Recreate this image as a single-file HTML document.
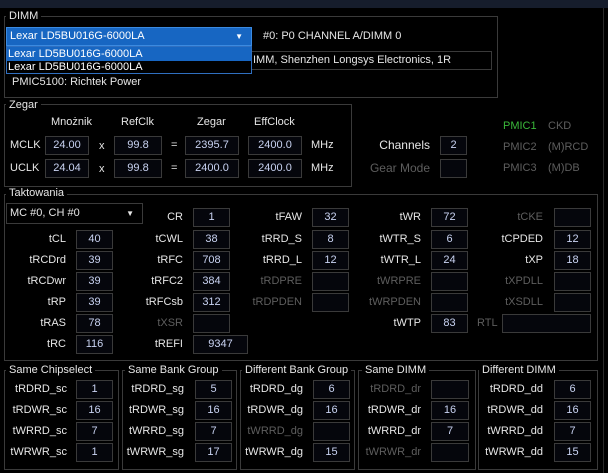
<!DOCTYPE html>
<html><head><meta charset="utf-8"><style>
*{margin:0;padding:0;box-sizing:border-box}
body{width:608px;height:473px;background:#000;font-family:"Liberation Sans",sans-serif;font-size:11px;color:#e6e6e6;position:relative;overflow:hidden}
.a{position:absolute;white-space:nowrap}
.g{position:absolute;border:1px solid #3a3a3a}
.t{position:absolute;background:#000;padding:0 3px;color:#e6e6e6;font-size:11px;line-height:13px}
.b{position:absolute;border:1px solid #3a3a3a;background:#05060c;color:#c9d3f2;text-align:center;height:19px;line-height:17px}
.l{position:absolute;text-align:right;line-height:19px;width:90px;white-space:nowrap}
.d{color:#5e5e5e}
</style></head><body>
<div class="a" style="left:0;top:0;width:608px;height:8px;background:#161d2c"></div>
<div class="a" style="left:603px;top:8px;width:1px;height:465px;background:#2a2a2a"></div>

<!-- DIMM -->
<div class="g" style="left:4px;top:16px;width:494px;height:82px"></div>
<div class="t" style="left:6px;top:10px">DIMM</div>
<div class="a" style="left:6px;top:27px;width:246px;height:19px;background:#1766c2;border:1px solid #3b8ae0;color:#fff;line-height:17px;padding-left:3px">Lexar LD5BU016G-6000LA<span style="position:absolute;right:8px;top:0;font-size:8px">▼</span></div>
<div class="a" style="left:263px;top:29px;line-height:15px">#0: P0 CHANNEL A/DIMM 0</div>
<div class="a" style="left:250px;top:51px;width:242px;height:19px;border:1px solid #3a3a3a;line-height:17px;padding-left:2px">IMM, Shenzhen Longsys Electronics, 1R</div>
<div class="a" style="left:6px;top:46px;width:246px;height:28px;border:1px solid #2f6fc0;background:#000"></div>
<div class="a" style="left:7px;top:47px;width:244px;height:14px;background:#1766c2;color:#fff;line-height:14px;padding-left:1px">Lexar LD5BU016G-6000LA</div>
<div class="a" style="left:7px;top:61px;width:244px;height:12px;color:#fff;line-height:12px;padding-left:1px">Lexar LD5BU016G-6000LA</div>
<div class="a" style="left:12px;top:76px;line-height:13px">PMIC5100: Richtek Power</div>

<!-- Zegar -->
<div class="g" style="left:4px;top:104px;width:348px;height:83px"></div>
<div class="t" style="left:6px;top:99px">Zegar</div>
<div class="a" style="left:51px;top:116px">Mnożnik</div>
<div class="a" style="left:121px;top:116px">RefClk</div>
<div class="a" style="left:197px;top:116px">Zegar</div>
<div class="a" style="left:254px;top:116px">EffClock</div>
<div class="a" style="left:10px;top:139px">MCLK</div>
<div class="b" style="left:45px;top:136px;width:44px">24.00</div>
<div class="a" style="left:99px;top:140px">x</div>
<div class="b" style="left:114px;top:136px;width:48px">99.8</div>
<div class="a" style="left:171px;top:139px">=</div>
<div class="b" style="left:185px;top:136px;width:54px">2395.7</div>
<div class="b" style="left:248px;top:136px;width:54px">2400.0</div>
<div class="a" style="left:311px;top:139px">MHz</div>
<div class="a" style="left:10px;top:162px">UCLK</div>
<div class="b" style="left:45px;top:159px;width:44px">24.04</div>
<div class="a" style="left:99px;top:163px">x</div>
<div class="b" style="left:114px;top:159px;width:48px">99.8</div>
<div class="a" style="left:171px;top:162px">=</div>
<div class="b" style="left:185px;top:159px;width:54px">2400.0</div>
<div class="b" style="left:248px;top:159px;width:54px">2400.0</div>
<div class="a" style="left:311px;top:162px">MHz</div>

<div class="l" style="left:340px;top:136px;font-size:12px">Channels</div>
<div class="b" style="left:440px;top:136px;width:27px">2</div>
<div class="l d" style="left:340px;top:159px;font-size:12px">Gear Mode</div>
<div class="b" style="left:440px;top:159px;width:27px"></div>
<div class="a" style="left:503px;top:120px;color:#3ab83a">PMIC1</div>
<div class="a d" style="left:548px;top:120px">CKD</div>
<div class="a d" style="left:503px;top:141px">PMIC2</div>
<div class="a d" style="left:548px;top:141px">(M)RCD</div>
<div class="a d" style="left:503px;top:162px">PMIC3</div>
<div class="a d" style="left:548px;top:162px">(M)DB</div>

<!-- Taktowania -->
<div class="g" style="left:4px;top:194px;width:594px;height:167px"></div>
<div class="t" style="left:6px;top:187px">Taktowania</div>
<div class="a" style="left:6px;top:203px;width:137px;height:21px;border:1px solid #3a3a3a;line-height:19px;padding-left:3px">MC #0, CH #0<span style="position:absolute;right:8px;top:0;font-size:8px">▼</span></div>

<!-- col1 -->
<div class="l" style="left:-24px;top:230px">tCL</div><div class="b" style="left:76px;top:230px;width:37px">40</div>
<div class="l" style="left:-24px;top:251px">tRCDrd</div><div class="b" style="left:76px;top:251px;width:37px">39</div>
<div class="l" style="left:-24px;top:272px">tRCDwr</div><div class="b" style="left:76px;top:272px;width:37px">39</div>
<div class="l" style="left:-24px;top:293px">tRP</div><div class="b" style="left:76px;top:293px;width:37px">39</div>
<div class="l" style="left:-24px;top:314px">tRAS</div><div class="b" style="left:76px;top:314px;width:37px">78</div>
<div class="l" style="left:-24px;top:335px">tRC</div><div class="b" style="left:76px;top:335px;width:37px">116</div>
<!-- col2 -->
<div class="l" style="left:93px;top:208px">CR</div><div class="b" style="left:193px;top:208px;width:37px">1</div>
<div class="l" style="left:93px;top:230px">tCWL</div><div class="b" style="left:193px;top:230px;width:37px">38</div>
<div class="l" style="left:93px;top:251px">tRFC</div><div class="b" style="left:193px;top:251px;width:37px">708</div>
<div class="l" style="left:93px;top:272px">tRFC2</div><div class="b" style="left:193px;top:272px;width:37px">384</div>
<div class="l" style="left:93px;top:293px">tRFCsb</div><div class="b" style="left:193px;top:293px;width:37px">312</div>
<div class="l d" style="left:93px;top:314px">tXSR</div><div class="b" style="left:193px;top:314px;width:37px"></div>
<div class="l" style="left:93px;top:335px">tREFI</div><div class="b" style="left:193px;top:335px;width:55px">9347</div>
<!-- col3 -->
<div class="l" style="left:212px;top:208px">tFAW</div><div class="b" style="left:312px;top:208px;width:37px">32</div>
<div class="l" style="left:212px;top:230px">tRRD_S</div><div class="b" style="left:312px;top:230px;width:37px">8</div>
<div class="l" style="left:212px;top:251px">tRRD_L</div><div class="b" style="left:312px;top:251px;width:37px">12</div>
<div class="l d" style="left:212px;top:272px">tRDPRE</div><div class="b" style="left:312px;top:272px;width:37px"></div>
<div class="l d" style="left:212px;top:293px">tRDPDEN</div><div class="b" style="left:312px;top:293px;width:37px"></div>
<!-- col4 -->
<div class="l" style="left:331px;top:208px">tWR</div><div class="b" style="left:431px;top:208px;width:37px">72</div>
<div class="l" style="left:331px;top:230px">tWTR_S</div><div class="b" style="left:431px;top:230px;width:37px">6</div>
<div class="l" style="left:331px;top:251px">tWTR_L</div><div class="b" style="left:431px;top:251px;width:37px">24</div>
<div class="l d" style="left:331px;top:272px">tWRPRE</div><div class="b" style="left:431px;top:272px;width:37px"></div>
<div class="l d" style="left:331px;top:293px">tWRPDEN</div><div class="b" style="left:431px;top:293px;width:37px"></div>
<div class="l" style="left:331px;top:314px">tWTP</div><div class="b" style="left:431px;top:314px;width:37px">83</div>
<!-- col5 -->
<div class="l d" style="left:453px;top:208px">tCKE</div><div class="b" style="left:554px;top:208px;width:37px"></div>
<div class="l" style="left:453px;top:230px">tCPDED</div><div class="b" style="left:554px;top:230px;width:37px">12</div>
<div class="l" style="left:453px;top:251px">tXP</div><div class="b" style="left:554px;top:251px;width:37px">18</div>
<div class="l d" style="left:453px;top:272px">tXPDLL</div><div class="b" style="left:554px;top:272px;width:37px"></div>
<div class="l d" style="left:453px;top:293px">tXSDLL</div><div class="b" style="left:554px;top:293px;width:37px"></div>
<div class="a d" style="left:477px;top:314px;line-height:19px">RTL</div><div class="b" style="left:502px;top:314px;width:89px"></div>

<!-- bottom groups -->
<div class="g" style="left:4px;top:370px;width:115px;height:100px"></div>
<div class="t" style="left:6px;top:364px">Same Chipselect</div>
<div class="g" style="left:122px;top:370px;width:115px;height:100px"></div>
<div class="t" style="left:125px;top:364px">Same Bank Group</div>
<div class="g" style="left:240px;top:370px;width:115px;height:100px"></div>
<div class="t" style="left:242px;top:364px">Different Bank Group</div>
<div class="g" style="left:358px;top:370px;width:118px;height:100px"></div>
<div class="t" style="left:362px;top:364px">Same DIMM</div>
<div class="g" style="left:478px;top:370px;width:120px;height:100px"></div>
<div class="t" style="left:479px;top:364px">Different DIMM</div>

<div class="l" style="left:-23px;top:380px">tRDRD_sc</div><div class="b" style="left:76px;top:380px;width:37px">1</div>
<div class="l" style="left:-23px;top:401px">tRDWR_sc</div><div class="b" style="left:76px;top:401px;width:37px">16</div>
<div class="l" style="left:-23px;top:422px">tWRRD_sc</div><div class="b" style="left:76px;top:422px;width:37px">7</div>
<div class="l" style="left:-23px;top:443px">tWRWR_sc</div><div class="b" style="left:76px;top:443px;width:37px">1</div>

<div class="l" style="left:94px;top:380px">tRDRD_sg</div><div class="b" style="left:195px;top:380px;width:37px">5</div>
<div class="l" style="left:94px;top:401px">tRDWR_sg</div><div class="b" style="left:195px;top:401px;width:37px">16</div>
<div class="l" style="left:94px;top:422px">tWRRD_sg</div><div class="b" style="left:195px;top:422px;width:37px">7</div>
<div class="l" style="left:94px;top:443px">tWRWR_sg</div><div class="b" style="left:195px;top:443px;width:37px">17</div>

<div class="l" style="left:213px;top:380px">tRDRD_dg</div><div class="b" style="left:313px;top:380px;width:37px">6</div>
<div class="l" style="left:213px;top:401px">tRDWR_dg</div><div class="b" style="left:313px;top:401px;width:37px">16</div>
<div class="l d" style="left:213px;top:422px">tWRRD_dg</div><div class="b" style="left:313px;top:422px;width:37px"></div>
<div class="l" style="left:213px;top:443px">tWRWR_dg</div><div class="b" style="left:313px;top:443px;width:37px">15</div>

<div class="l d" style="left:331px;top:380px">tRDRD_dr</div><div class="b" style="left:431px;top:380px;width:38px"></div>
<div class="l" style="left:331px;top:401px">tRDWR_dr</div><div class="b" style="left:431px;top:401px;width:38px">16</div>
<div class="l" style="left:331px;top:422px">tWRRD_dr</div><div class="b" style="left:431px;top:422px;width:38px">7</div>
<div class="l d" style="left:331px;top:443px">tWRWR_dr</div><div class="b" style="left:431px;top:443px;width:38px"></div>

<div class="l" style="left:453px;top:380px">tRDRD_dd</div><div class="b" style="left:554px;top:380px;width:37px">6</div>
<div class="l" style="left:453px;top:401px">tRDWR_dd</div><div class="b" style="left:554px;top:401px;width:37px">16</div>
<div class="l" style="left:453px;top:422px">tWRRD_dd</div><div class="b" style="left:554px;top:422px;width:37px">7</div>
<div class="l" style="left:453px;top:443px">tWRWR_dd</div><div class="b" style="left:554px;top:443px;width:37px">15</div>
</body></html>
